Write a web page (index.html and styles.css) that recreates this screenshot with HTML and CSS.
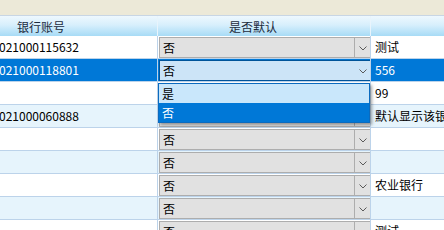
FILE: index.html
```html
<!DOCTYPE html>
<html lang="zh-CN">
<head>
  <meta charset="UTF-8">
  <title>银行账号</title>
  <link rel="stylesheet" href="styles.css">
</head>
<body>

  <div class="top-band"></div>

  <div class="grid">
    <div class="row header">
      <div class="cell c1"><span class="head-text">银行账号</span></div>
      <div class="cell c2"><span class="head-text">是否默认</span></div>
      <div class="cell c3"></div>
    </div>

    <div class="row">
      <div class="cell c1">021000115632</div>
      <div class="cell c2"><div class="combo"><span class="combo-text">否</span><span class="combo-btn"><svg width="8" height="5" viewBox="0 0 8 5"><polyline points="0.5,0.5 4,4 7.5,0.5" fill="none" stroke="#5a5a5a" stroke-width="1"/></svg></span></div></div>
      <div class="cell c3">测试</div>
    </div>

    <div class="row selected">
      <div class="cell c1">021000118801</div>
      <div class="cell c2"><div class="combo open"><span class="combo-text">否</span><span class="combo-btn"><svg width="8" height="5" viewBox="0 0 8 5"><polyline points="0.5,0.5 4,4 7.5,0.5" fill="none" stroke="#5a5a5a" stroke-width="1"/></svg></span></div></div>
      <div class="cell c3">556</div>
    </div>

    <div class="row">
      <div class="cell c1"></div>
      <div class="cell c2"><div class="combo"><span class="combo-text"></span><span class="combo-btn"></span></div></div>
      <div class="cell c3">99</div>
    </div>

    <div class="row alt">
      <div class="cell c1">021000060888</div>
      <div class="cell c2"><div class="combo"><span class="combo-text">是</span><span class="combo-btn"><svg width="8" height="5" viewBox="0 0 8 5"><polyline points="0.5,0.5 4,4 7.5,0.5" fill="none" stroke="#5a5a5a" stroke-width="1"/></svg></span></div></div>
      <div class="cell c3">默认显示该银行账号</div>
    </div>

    <div class="row">
      <div class="cell c1"></div>
      <div class="cell c2"><div class="combo"><span class="combo-text">否</span><span class="combo-btn"><svg width="8" height="5" viewBox="0 0 8 5"><polyline points="0.5,0.5 4,4 7.5,0.5" fill="none" stroke="#5a5a5a" stroke-width="1"/></svg></span></div></div>
      <div class="cell c3"></div>
    </div>

    <div class="row alt">
      <div class="cell c1"></div>
      <div class="cell c2"><div class="combo"><span class="combo-text">否</span><span class="combo-btn"><svg width="8" height="5" viewBox="0 0 8 5"><polyline points="0.5,0.5 4,4 7.5,0.5" fill="none" stroke="#5a5a5a" stroke-width="1"/></svg></span></div></div>
      <div class="cell c3"></div>
    </div>

    <div class="row">
      <div class="cell c1"></div>
      <div class="cell c2"><div class="combo"><span class="combo-text">否</span><span class="combo-btn"><svg width="8" height="5" viewBox="0 0 8 5"><polyline points="0.5,0.5 4,4 7.5,0.5" fill="none" stroke="#5a5a5a" stroke-width="1"/></svg></span></div></div>
      <div class="cell c3">农业银行</div>
    </div>

    <div class="row alt">
      <div class="cell c1"></div>
      <div class="cell c2"><div class="combo"><span class="combo-text">否</span><span class="combo-btn"><svg width="8" height="5" viewBox="0 0 8 5"><polyline points="0.5,0.5 4,4 7.5,0.5" fill="none" stroke="#5a5a5a" stroke-width="1"/></svg></span></div></div>
      <div class="cell c3"></div>
    </div>

    <div class="row">
      <div class="cell c1"></div>
      <div class="cell c2"><div class="combo"><span class="combo-text">否</span><span class="combo-btn"><svg width="8" height="5" viewBox="0 0 8 5"><polyline points="0.5,0.5 4,4 7.5,0.5" fill="none" stroke="#5a5a5a" stroke-width="1"/></svg></span></div></div>
      <div class="cell c3">测试</div>
    </div>

    <!-- open list of the selected row's combo -->
    <div class="dropdown">
      <div class="option hover">是</div>
      <div class="option chosen">否</div>
    </div>
  </div>

</body>
</html>
```

FILE: styles.css
```css
body {
  margin: 0;
  background: #ece9d8;
  font-family: "Noto Sans CJK SC", "Microsoft YaHei", sans-serif;
  font-size: 12px;
  color: #000;
  overflow: hidden;
}
.top-band {
  height: 15px;
}
.grid {
  position: relative;
  height: 215px;
  overflow: hidden;
  background: #fff;
  border-top: 1px solid #c8d6e4;
}
.row {
  display: flex;
  height: 22px;
  border-bottom: 1px solid #bcd3ea;
  background: #fff;
}
.row.alt {
  background: #e6f4fc;
}
.row.selected {
  background: #0078d7;
  color: #fff;
}
.cell {
  flex: none;
  height: 22px;
  line-height: 22px;
  white-space: nowrap;
  overflow: hidden;
}
.c1 {
  width: 157px;
  border-right: 1px solid #bcd3ea;
  text-indent: -1px;
}
.c2 {
  width: 212px;
  border-right: 1px solid #bcd3ea;
  padding-top: 1px;
  height: 21px;
  box-sizing: content-box;
}
.c3 {
  width: 73px;
  padding-left: 4px;
}
.header {
  height: 20px;
  border-bottom: none;
  background: linear-gradient(#eef8fe, #d7effc 45%, #a7dbf6);
}
.header .cell {
  height: 20px;
  line-height: 21px;
  padding-top: 0;
  border-right: 1px solid #e8f4fc;
  color: #1b2b3c;
}
.header .c1 .head-text {
  padding-left: 18px;
}
.header .c2 .head-text {
  padding-left: 71px;
}
.combo {
  display: flex;
  height: 19px;
  width: 210px;
  margin-left: 1px;
  border: 1px solid #adadad;
  background: #e1e1e1;
  color: #000;
  line-height: 19px;
}
.combo.open {
  background: #cce4f7;
  border-color: #005499;
}
.combo-text {
  flex: 1;
  padding-left: 3px;
}
.combo-btn {
  width: 15px;
  border-left: 1px solid #adadad;
  display: flex;
  align-items: center;
  justify-content: center;
  padding-top: 1px;
}
.combo.open .combo-btn {
  border-left-color: transparent;
}
.dropdown {
  position: absolute;
  left: 158px;
  top: 67px;
  width: 210px;
  border: 1px solid #0b6bbf;
  background: #fff;
  box-shadow: 2px 2px 3px rgba(0, 0, 0, 0.35);
}
.option {
  height: 19px;
  line-height: 19px;
  padding-left: 3px;
}
.option.hover {
  background: #c9e7fb;
}
.option.chosen {
  background: #0078d7;
  color: #fff;
}
```
